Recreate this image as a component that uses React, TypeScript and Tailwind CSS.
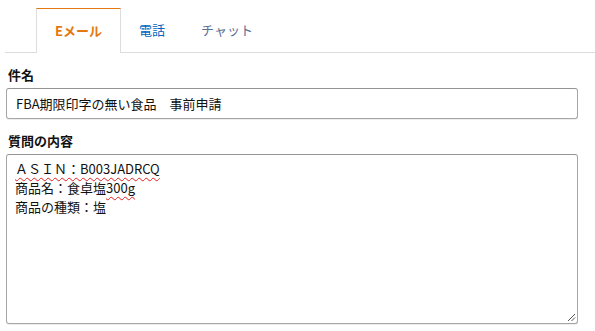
import React from "react";

export default function App() {
  const wavy =
    "underline decoration-wavy decoration-[#e02020] decoration-[1px] underline-offset-[3px]";
  return (
    <div className="w-[595px] h-[331px] bg-white text-[#111] font-['Noto_Sans_CJK_JP','Noto_Sans',sans-serif] overflow-hidden">
      <div className="pt-[8px] pl-[5px]">
        <div className="flex border-b border-[#dddddd] pl-[31px] h-[45px]">
          <div className="-mb-px h-[45px] px-[18px] flex items-center bg-white border-x border-t border-x-[#dddddd] border-t-[#e47911] text-[13px] font-bold text-[#e47911]">
            Eメール
          </div>
          <div className="px-[18px] flex items-center text-[13px] text-[#0066c0]">
            電話
          </div>
          <div className="px-[18px] flex items-center text-[13px] text-[#5c6f95]">
            チャット
          </div>
        </div>
      </div>
      <div className="pl-[6px] w-[578px]">
        <div className="mt-[13px] pl-[2px] text-[13px] leading-[18px] font-bold">件名</div>
        <div className="mt-[4px] h-[31px] border border-[#a6a6a6] border-t-[#949494] rounded-[3px] shadow-[0_1px_0_rgba(0,0,0,0.07)] flex items-center pl-[9px] text-[13px]">
          FBA期限印字の無い食品　事前申請
        </div>
        <div className="mt-[13px] pl-[2px] text-[13px] leading-[18px] font-bold">質問の内容</div>
        <div className="relative mt-[4px] h-[170px] border border-[#a6a6a6] border-t-[#949494] rounded-[3px] shadow-[0_1px_0_rgba(0,0,0,0.07)] pl-[8px] pt-[4px] text-[13px] leading-[19px]">
          <div>
            <span className={wavy}>ＡＳＩＮ：B003JADRCQ</span>
          </div>
          <div>
            商品名：食卓塩<span className={wavy}>300g</span>
          </div>
          <div>商品の種類：塩</div>
          <svg
            className="absolute right-[1px] bottom-[1px]"
            width="9"
            height="9"
            viewBox="0 0 9 9"
          >
            <path d="M8 1 L1 8" stroke="#555" strokeWidth="1" />
            <path d="M8 4.5 L4.5 8" stroke="#555" strokeWidth="1" />
          </svg>
        </div>
      </div>
    </div>
  );
}
